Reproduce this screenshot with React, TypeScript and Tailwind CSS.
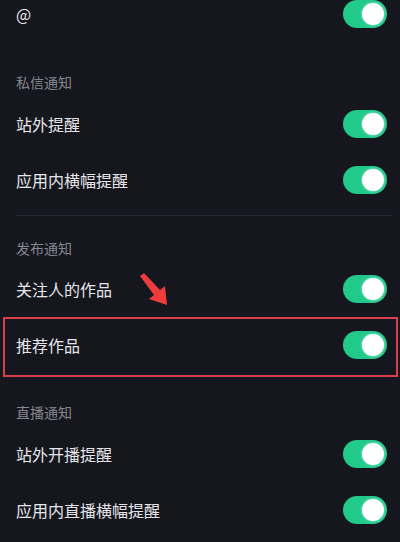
import React from "react";

type Section = { title: string; rows: string[]; divider?: boolean; highlight?: string };

const sections: Section[] = [
  { title: "私信通知", rows: ["站外提醒", "应用内横幅提醒"], divider: true },
  { title: "发布通知", rows: ["关注人的作品", "推荐作品"], highlight: "推荐作品" },
  { title: "直播通知", rows: ["站外开播提醒", "应用内直播横幅提醒"] },
];

function Toggle() {
  return (
    <div className="flex h-[28px] w-[44px] items-center justify-end rounded-full bg-[#21c98a] px-[3px]">
      <div className="h-[22px] w-[22px] rounded-full bg-white shadow-[0_0_3px_rgba(255,255,255,0.6)]" />
    </div>
  );
}

function SettingRow({ label, boxed }: { label: string; boxed?: boolean }) {
  return (
    <div className="relative flex h-14 items-center justify-between pl-4 pr-[13px]">
      <span className="text-[16px] text-[#e6e6e8]">{label}</span>
      <Toggle />
      {boxed && (
        <div className="pointer-events-none absolute -bottom-1 left-[3px] right-[2px] top-0 border-2 border-[#d8404a]" />
      )}
    </div>
  );
}

export default function App() {
  return (
    <div
      className="relative h-[542px] w-[400px] overflow-hidden bg-[#15161e]"
      style={{ fontFamily: '"Noto Sans CJK SC", "Noto Sans", sans-serif' }}
    >
      <div className="-mt-[14px]">
        <SettingRow label="@" />
        {sections.map((s, i) => (
          <div key={s.title}>
            <div className={`flex h-5 items-center px-4 text-[14px] text-[#85868e] ${i === 2 ? "mt-[29px]" : i === 1 ? "mt-[22px]" : "mt-[30px]"}`}>
              {s.title}
            </div>
            <div className={i === 1 ? "mt-[3px]" : "mt-1"}>
              {s.rows.map((r) => (
                <SettingRow key={r} label={r} boxed={r === s.highlight} />
              ))}
            </div>
            {s.divider && <div className="ml-4 mr-2 mt-[7px] h-px bg-[#272832]" />}
          </div>
        ))}
      </div>
      <svg className="pointer-events-none absolute left-0 top-0" width="400" height="542">
        <polygon
          points="140,276 144,273 160,290 165,286 167,305 149,299 154,295"
          fill="#ee3b3b"
        />
      </svg>
    </div>
  );
}
